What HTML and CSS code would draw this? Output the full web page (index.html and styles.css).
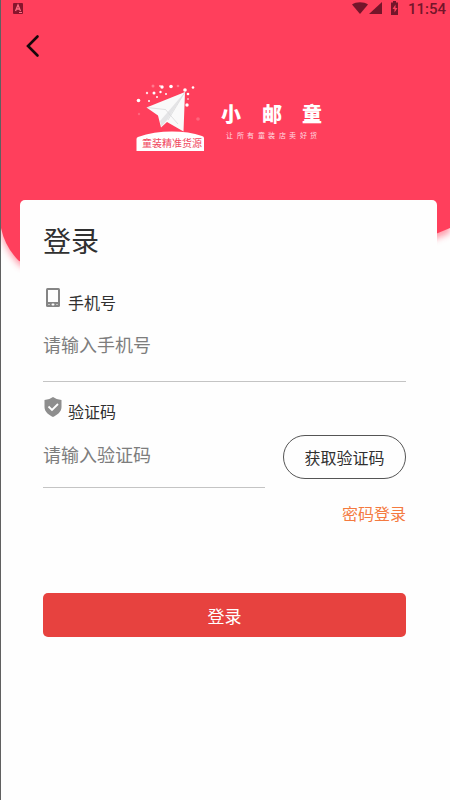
FILE: index.html
```html
<!DOCTYPE html>
<html lang="zh-CN">
<head>
<meta charset="utf-8">
<meta name="viewport" content="width=device-width, initial-scale=1">
<title>登录</title>
<link rel="stylesheet" href="styles.css">
</head>
<body>
<div class="page">
  <svg class="backdrop" viewBox="0 0 449 280" preserveAspectRatio="none" aria-hidden="true">
    <defs><filter id="soft" x="-10%" y="-10%" width="120%" height="120%"><feGaussianBlur stdDeviation="3"/></filter></defs>
    <path d="M0 100V234Q5 252 19 266C150 299 330 274 437 238L449 233V100Z" fill="#ff3f5c" opacity=".5" filter="url(#soft)"/>
    <path d="M0 0V228Q4 247 18 261C150 292 330 272 437 233L449 228V0Z" fill="#ff3f5c"/>
  </svg>

  <div class="status">
    <svg width="12" height="12" viewBox="0 0 12 12" aria-hidden="true">
      <rect x="1" y="1" width="10" height="11" rx="1" fill="#86152c"/>
      <path d="M3.500 9L6 3l2.500 6M4.500 7h3" fill="none" stroke="#ff6c83" stroke-width="1.300"/>
      <path d="M7 10.500h3" stroke="#ff6c83"/>
    </svg>
    <div class="status-right">
      <svg width="50" height="14" viewBox="0 0 50 14" fill="#74152a" aria-hidden="true">
        <path d="M0 3.500C4 .5 12 .5 16 3.500L8 13Z"/>
        <path d="M30 1V13H17Z"/>
        <path d="M39 1.500h2V0h3v1.500h2V14h-7Z"/>
        <path d="M43.500 3.500L40.500 8h2v3.500l3-4.500h-2Z" fill="#ff3f5c"/>
      </svg>
      <span class="clock">11:54</span>
    </div>
  </div>

  <header class="header">
    <button class="back" type="button" aria-label="返回">
      <svg width="14" height="24" viewBox="0 0 14 24" aria-hidden="true"><path d="M11.500 2.500L2 12l9.500 9.500" fill="none" stroke="#16070a" stroke-width="2.600" stroke-linecap="round"/></svg>
    </button>
    <svg class="brand" width="190" height="72" viewBox="134 82 190 72" role="img" aria-label="小邮童">
      <g fill="#fff">
        <circle cx="138.500" cy="100.500" r="1.800"/><circle cx="147" cy="93" r="1.200" opacity=".8"/>
        <circle cx="149" cy="101" r="1"/><circle cx="154" cy="93" r="1.500"/><circle cx="157" cy="97" r="1"/>
        <circle cx="160.500" cy="92" r="1.200"/><circle cx="162" cy="87" r="1.700"/><circle cx="171" cy="86.500" r="1.800"/>
        <circle cx="160" cy="86" r="1" opacity=".7"/><circle cx="153" cy="86" r="1.500" opacity=".3"/>
        <circle cx="166" cy="94" r="1"/><circle cx="178" cy="86" r="1.300" opacity=".3"/>
        <circle cx="185" cy="90" r="1.800"/><circle cx="193" cy="87.500" r="1.300"/><circle cx="188" cy="94" r="1.300"/>
        <circle cx="187" cy="105" r="1.700"/><circle cx="188" cy="99" r="1" opacity=".6"/>
        <circle cx="198" cy="119" r="1.800" opacity=".2"/><circle cx="139" cy="114" r="1.200" opacity=".2"/>
      </g>
      <path d="M185 92L146.500 107.500l11.500 8 3 12 6-5.500 16.500 9.500Z" fill="#fafafa"/>
      <path d="M185 92L160 121l1.500 5.500 6-7Z" fill="#e4e4e6"/>
      <path d="M147 107.500l18 2M185 92l-17 28M165 109l13 15" fill="none" stroke="#d5d5d7" stroke-width=".7"/>
      <path d="M136.500 151V139q0-1.500 1.500-2C158 130 184 130 202 136q2 .5 2 2v13Z" fill="#fff"/>
      <text class="brand-badge" x="142" y="147">童装精准货源</text>
      <text class="brand-name" x="221 262 302" y="122">小邮童</text>
      <text class="brand-motto" x="226 237 247 258 268 279 289 300 310" y="138">让所有童装店卖好货</text>
    </svg>
  </header>

  <main class="card">
    <h1 class="title">登录</h1>
    <form class="form">
      <label class="label" for="phone">
        <svg width="20" height="20" viewBox="0 0 20 20" aria-hidden="true">
          <rect x="3" y="0" width="14" height="19" rx="1.500" fill="#858585"/>
          <rect x="5" y="2" width="10" height="12" fill="#fefefe"/>
          <rect x="8.500" y="15.500" width="3" height="2" rx="1" fill="#fefefe"/>
          <path d="M5 16.500h2M13 16.500h2" stroke="#c4c4c4"/>
        </svg>
        <span>手机号</span>
      </label>
      <input class="input" id="phone" type="tel" placeholder="请输入手机号">
      <label class="label" for="code">
        <svg width="20" height="20" viewBox="0 0 20 20" aria-hidden="true">
          <path d="M10 0Q14 3 18.500 3V10C18.500 15 14 18 10 20 6 18 1.500 15 1.500 10V3Q6 3 10 0Z" fill="#8e8e8e"/>
          <path d="M5.500 9.500l3.500 3.500 6-6" fill="none" stroke="#fff" stroke-width="1.800"/>
        </svg>
        <span>验证码</span>
      </label>
      <div class="code-row">
        <input class="input" id="code" type="text" placeholder="请输入验证码">
        <button class="get-code" type="button">获取验证码</button>
      </div>
      <a class="switch" href="#">密码登录</a>
      <button class="submit" type="submit">登录</button>
    </form>
  </main>
</div>
</body>
</html>
```
FILE: styles.css
```css
* { box-sizing: border-box; }

body {
  margin: 0;
  background: #fefefe;
  color: #303030;
  font-family: Roboto, "Noto Sans CJK SC", sans-serif;
}

button, input { font: inherit; }

.page {
  position: relative;
  min-height: 100vh;
  border-left: 1px solid #606060;
}

.backdrop {
  position: absolute;
  top: 0;
  left: 0;
  width: 100%;
  height: 280px;
}

.status,
.header,
.card { position: relative; }

.status {
  display: flex;
  justify-content: space-between;
  align-items: center;
  height: 16px;
  padding: 0 4px 0 11px;
}

.status-right {
  display: flex;
  align-items: center;
  gap: 6px;
}

.clock {
  padding-top: 2px;
  color: #74152a;
  font-size: 15px;
  line-height: 16px;
  font-weight: 500;
}

.header {
  height: 184px;
  padding: 18px 0 0 25px;
}

.back {
  display: block;
  padding: 0;
  border: 0;
  background: none;
  line-height: 0;
}

.brand {
  display: block;
  margin: 24px auto 0 108px;
}

.brand-badge {
  fill: #f0475f;
  font-size: 10px;
}

.brand-name {
  fill: #fff;
  font-size: 20px;
  font-weight: 900;
}

.brand-motto {
  fill: #ffdbe0;
  font-size: 7px;
}

.card {
  margin: 0 13px 0 19px;
  padding: 23px 31px 24px 23px;
  border-radius: 5px;
  background: #fefefe;
}

.title {
  margin: 0 0 25px;
  font-size: 28px;
  line-height: 40px;
  font-weight: 400;
}

.form {
  display: flex;
  flex-direction: column;
}

.label {
  display: flex;
  gap: 5px;
  height: 28px;
  font-size: 16px;
  line-height: 32px;
}

.input {
  width: 100%;
  height: 66px;
  padding: 0 0 6px;
  border: 0;
  border-bottom: 1px solid #c4c4c4;
  border-radius: 0;
  outline: 0;
  background: none;
  color: #303030;
  font-size: 18px;
}

.input::placeholder {
  color: #7d7d7d;
  opacity: 1;
}

.label + .input { margin-bottom: 15px; }

.code-row {
  display: flex;
  align-items: center;
  gap: 18px;
}

.code-row .input {
  flex: 1;
  min-width: 0;
  height: 63px;
  padding-bottom: 2px;
}

.get-code {
  width: 123px;
  height: 44px;
  padding: 0;
  border: 1px solid #555;
  border-radius: 22px;
  background: none;
  color: #303030;
  font-size: 16px;
}

.switch {
  align-self: flex-end;
  margin-top: 15px;
  color: #f47a40;
  font-size: 16px;
  line-height: 24px;
  text-decoration: none;
}

.submit {
  height: 44px;
  margin-top: 66px;
  padding: 0;
  border: 0;
  border-radius: 5px;
  background: #e7423f;
  color: #fff;
  font-size: 17px;
}
```
